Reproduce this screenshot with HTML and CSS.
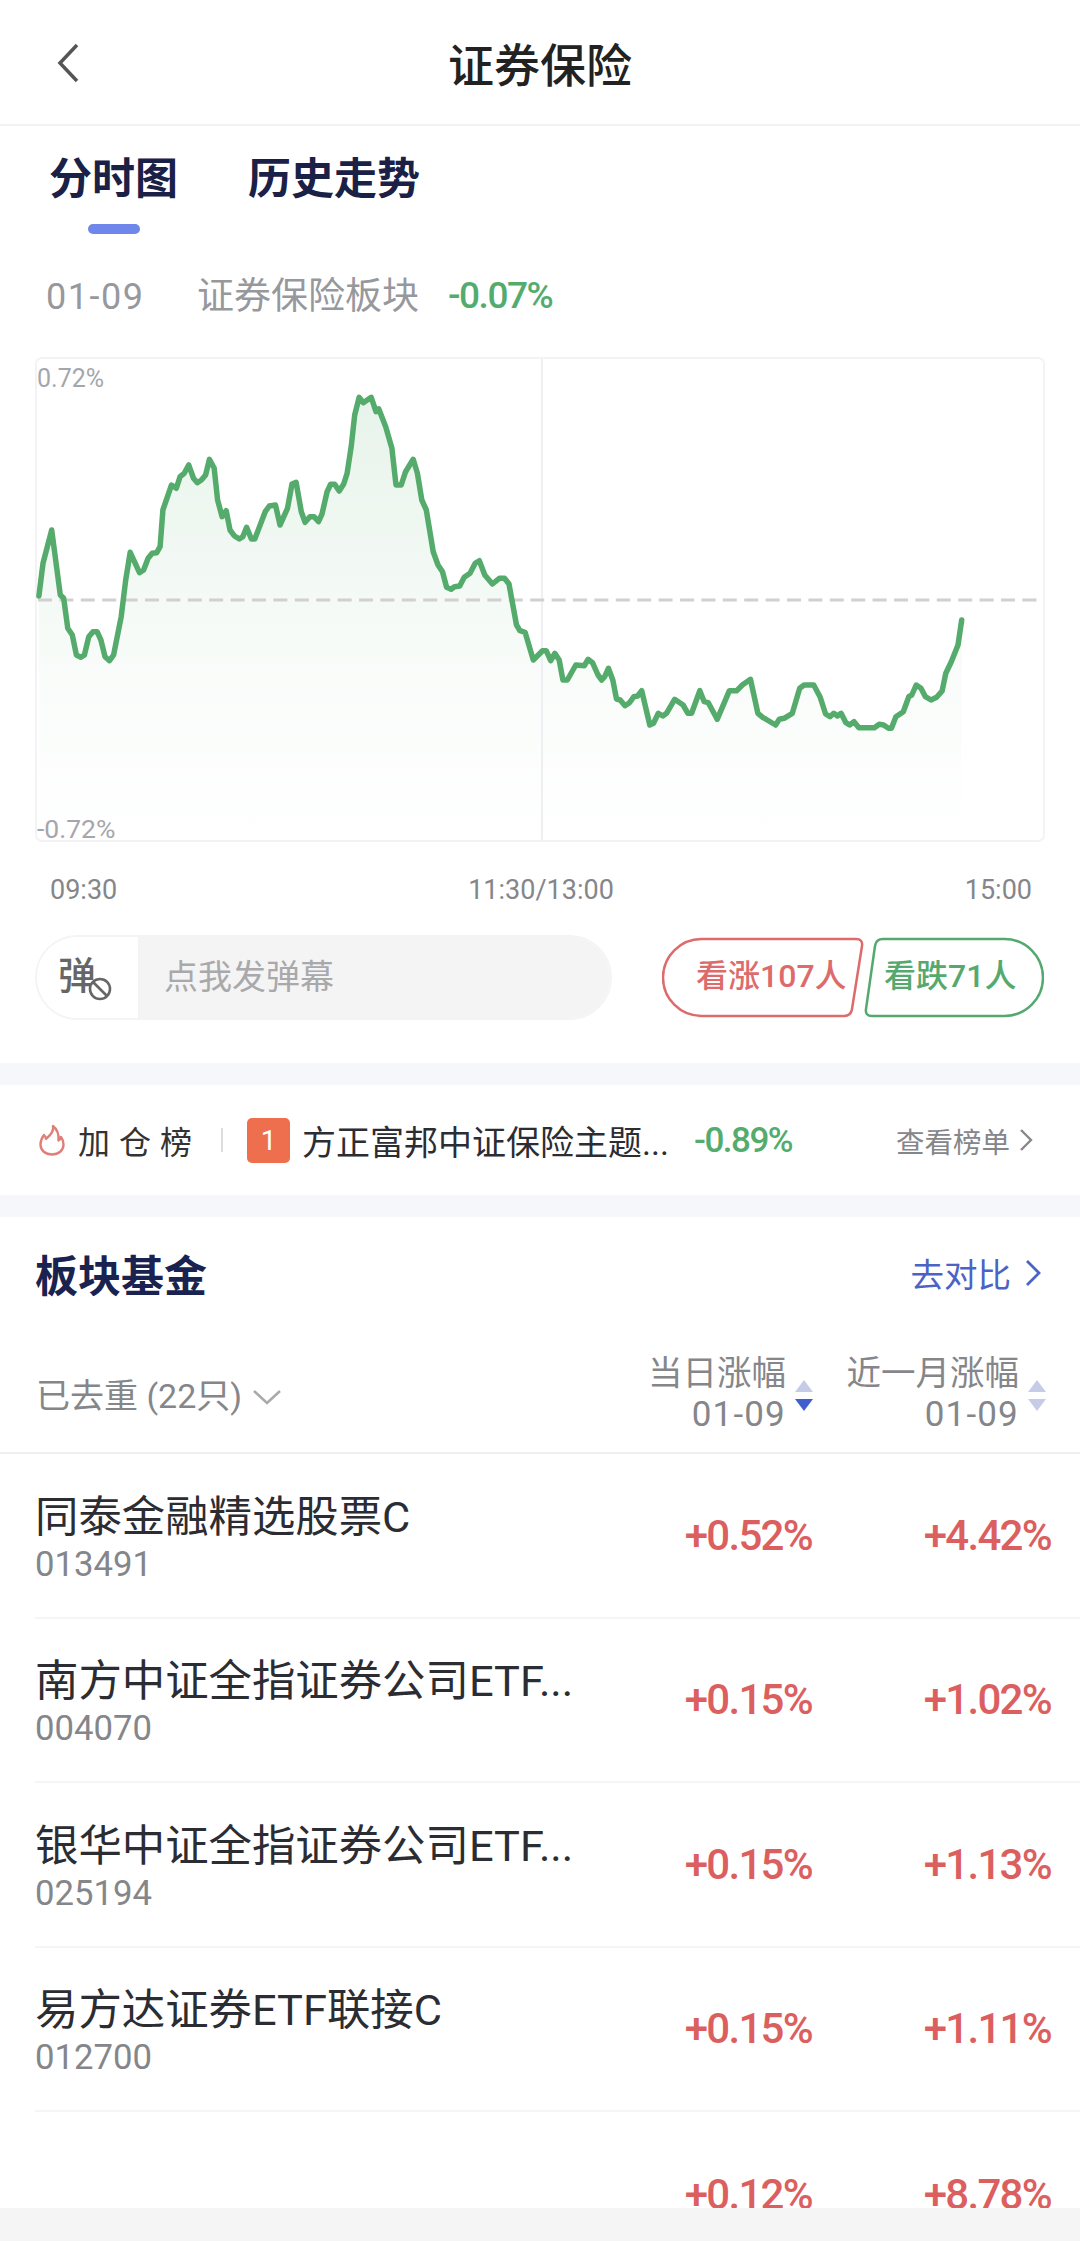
FILE: index.html
```html
<!DOCTYPE html>
<html lang="zh-CN">
<head>
    <meta charset="UTF-8">
    <meta name="viewport" content="width=device-width, initial-scale=1.0">
    <title>证券保险</title>
    <link rel="stylesheet" href="styles.css">
</head>
<body>
<div class="page">
    <div class="content">
        <div class="nav">
            <svg class="nav-back" width="24" height="40" viewBox="0 0 24 40"><path d="M21 2 L4 20 L21 38" fill="none" stroke="#555" stroke-width="3.5"/></svg>
            <div class="nav-title">证券保险</div>
        </div>

        <section class="trend">
            <div class="tabs">
                <div class="tab active">分时图<i></i></div>
                <div class="tab">历史走势</div>
            </div>

            <div class="date-row">
                <span class="date">01-09</span>
                <span class="board">证券保险板块</span>
                <span class="pct green">-0.07%</span>
            </div>

            <div class="chart">
                <svg width="1010" height="485" viewBox="35 357 1010 485">
                    <defs>
                        <linearGradient id="area" gradientUnits="userSpaceOnUse" x1="0" y1="397" x2="0" y2="842">
                            <stop offset="0" stop-color="#55ab6c" stop-opacity="0.14"/>
                            <stop offset="0.6" stop-color="#55ab6c" stop-opacity="0.04"/>
                            <stop offset="1" stop-color="#55ab6c" stop-opacity="0"/>
                        </linearGradient>
                    </defs>
                    <rect x="36" y="358" width="1008" height="483" rx="6" fill="#fff" stroke="#f3f3f5" stroke-width="2"/>
                    <polygon fill="url(#area)" points="38.9,842 38.9,596 43,563.3 51.7,530 60.3,595 63.7,598.3 67.8,628.3 72.3,635 76.4,655 80.9,657.3 84.4,655 88.8,636.7 93,631.7 97.1,631.7 100.9,640 105,656.7 109.5,660.7 113.6,655 121.2,616.7 125.7,580 130.2,552.3 139.5,572.7 143.6,570 148.1,558.3 152.2,553.3 156.7,552.7 160.1,546.7 162.9,510 171.5,485 176.3,488.3 180.1,476.7 184.2,473.3 188.7,465 193.5,478.3 197.3,482.7 201.4,480 205.6,475 209.4,459.3 214.2,468.3 217.6,500 222.1,516.7 226.2,510.7 230,530 234.2,535.7 239.3,539 242.8,536.7 246.6,527.3 251.4,539 254.8,539 265.2,511.7 269.3,506 275.5,505 280,525 287.5,508.3 292,484 296.1,482.3 301.3,511.7 305.1,522.3 309.9,516.7 314,516.7 318.5,521.7 322,514 327.1,491.7 330.6,484.3 334.7,484.3 339.2,491 343.7,484 347.1,473.3 351.2,446.7 354.7,415 359.2,397.3 363.3,402.7 371.2,397.3 376,411.7 378.8,409 385.7,426.7 391.9,448.3 396,485 401.2,485 405.6,471.7 413.2,459.3 417.4,473.3 421.8,500 426.3,510 433.2,551.7 438,565 442.5,571.7 446.6,587.3 451.1,589.3 454.5,586.7 459.7,586 464.2,577.3 470,573.3 475.2,563.3 479.3,560.7 484.8,575 492.4,584 499.3,578.3 504.5,578.3 509,584 516.5,625 520,630.7 525.1,632.3 533.3,660 542.5,650.7 546.2,650.7 550.7,660.7 554.8,653.3 559.2,660 562.9,680 567.3,680 575.8,665 584.4,665.7 588,659.3 592.5,662.7 598,675 601.7,680 604.7,676.7 608.4,668.3 612.8,680 616.5,699 620.2,700 625,705.7 629.5,702.7 633.9,696.7 637.6,696 641.7,690.7 649.8,725 653.5,723.3 658.3,713.3 662.8,716 666.5,713.3 674.6,699.3 683.1,705 687.9,713.3 691.6,713.3 699.8,690.7 704.2,701.7 708.3,702.7 717.2,719.3 729.4,690.7 736.8,690.7 742.3,685 750.5,679.3 757.9,713.3 762.7,717.3 775.6,725 779.3,719.3 784.1,718.3 792.3,713.3 799.7,688.3 804.1,685 813.7,685 820,696.7 825.6,714 830,716.7 833.7,713.3 837.4,716 841.1,713.3 845.9,722.7 849.6,725 854,721.7 858.9,727.7 874.4,727.7 879.2,724.3 883.6,725 888.5,728.3 891.4,728.3 895.9,716.7 903.3,711.7 908.8,696.7 911.8,695 916.2,685 921,688.3 925.4,696.7 931,700 936.6,697.3 942.1,691 945.8,673.3 951.3,661.7 958,645 961.7,620 961.7,842"/>
                    <line x1="542" y1="359" x2="542" y2="840" stroke="#eeeff3" stroke-width="2"/>
                    <line x1="38" y1="600" x2="1043" y2="600" stroke="#d0d0d2" stroke-width="3" stroke-dasharray="14 7.4"/>
                    <polyline fill="none" stroke="#55ab6c" stroke-width="5.5" stroke-linejoin="round" stroke-linecap="round" points="38.9,596 43,563.3 51.7,530 60.3,595 63.7,598.3 67.8,628.3 72.3,635 76.4,655 80.9,657.3 84.4,655 88.8,636.7 93,631.7 97.1,631.7 100.9,640 105,656.7 109.5,660.7 113.6,655 121.2,616.7 125.7,580 130.2,552.3 139.5,572.7 143.6,570 148.1,558.3 152.2,553.3 156.7,552.7 160.1,546.7 162.9,510 171.5,485 176.3,488.3 180.1,476.7 184.2,473.3 188.7,465 193.5,478.3 197.3,482.7 201.4,480 205.6,475 209.4,459.3 214.2,468.3 217.6,500 222.1,516.7 226.2,510.7 230,530 234.2,535.7 239.3,539 242.8,536.7 246.6,527.3 251.4,539 254.8,539 265.2,511.7 269.3,506 275.5,505 280,525 287.5,508.3 292,484 296.1,482.3 301.3,511.7 305.1,522.3 309.9,516.7 314,516.7 318.5,521.7 322,514 327.1,491.7 330.6,484.3 334.7,484.3 339.2,491 343.7,484 347.1,473.3 351.2,446.7 354.7,415 359.2,397.3 363.3,402.7 371.2,397.3 376,411.7 378.8,409 385.7,426.7 391.9,448.3 396,485 401.2,485 405.6,471.7 413.2,459.3 417.4,473.3 421.8,500 426.3,510 433.2,551.7 438,565 442.5,571.7 446.6,587.3 451.1,589.3 454.5,586.7 459.7,586 464.2,577.3 470,573.3 475.2,563.3 479.3,560.7 484.8,575 492.4,584 499.3,578.3 504.5,578.3 509,584 516.5,625 520,630.7 525.1,632.3 533.3,660 542.5,650.7 546.2,650.7 550.7,660.7 554.8,653.3 559.2,660 562.9,680 567.3,680 575.8,665 584.4,665.7 588,659.3 592.5,662.7 598,675 601.7,680 604.7,676.7 608.4,668.3 612.8,680 616.5,699 620.2,700 625,705.7 629.5,702.7 633.9,696.7 637.6,696 641.7,690.7 649.8,725 653.5,723.3 658.3,713.3 662.8,716 666.5,713.3 674.6,699.3 683.1,705 687.9,713.3 691.6,713.3 699.8,690.7 704.2,701.7 708.3,702.7 717.2,719.3 729.4,690.7 736.8,690.7 742.3,685 750.5,679.3 757.9,713.3 762.7,717.3 775.6,725 779.3,719.3 784.1,718.3 792.3,713.3 799.7,688.3 804.1,685 813.7,685 820,696.7 825.6,714 830,716.7 833.7,713.3 837.4,716 841.1,713.3 845.9,722.7 849.6,725 854,721.7 858.9,727.7 874.4,727.7 879.2,724.3 883.6,725 888.5,728.3 891.4,728.3 895.9,716.7 903.3,711.7 908.8,696.7 911.8,695 916.2,685 921,688.3 925.4,696.7 931,700 936.6,697.3 942.1,691 945.8,673.3 951.3,661.7 958,645 961.7,620"/>
                </svg>
                <span class="chart-label top">0.72%</span>
                <span class="chart-label bottom">-0.72%</span>
            </div>

            <div class="axis">
                <span>09:30</span>
                <span>11:30/13:00</span>
                <span>15:00</span>
            </div>

            <div class="danmu-row">
                <div class="danmu">
                    <div class="danmu-switch">
                        <span>弹</span>
                        <svg class="danmu-ban" width="24" height="24" viewBox="0 0 24 24"><circle cx="12" cy="12" r="10" fill="#fff" stroke="#666" stroke-width="2.6"/><line x1="5.5" y1="5.5" x2="18.5" y2="18.5" stroke="#666" stroke-width="2.6"/></svg>
                    </div>
                    <div class="danmu-input">点我发弹幕</div>
                </div>
                <div class="votes">
                    <div class="vote up">
                        <svg width="202" height="81" viewBox="0 0 202 81"><path d="M39.500 2 H194 Q201 2 200 9 L190 72 Q189 79 182 79 H39.500 A38.500 38.500 0 0 1 39.500 2 Z" fill="#fff" stroke="#dd6b6b" stroke-width="2.500"/></svg>
                        <span>看涨107人</span>
                    </div>
                    <div class="vote down">
                        <svg width="180" height="81" viewBox="0 0 180 81"><path d="M140.500 2 H19 Q12 2 11 9 L2 72 Q1 79 8 79 H140.500 A38.500 38.500 0 0 0 140.500 2 Z" fill="#fff" stroke="#55a96f" stroke-width="2.500"/></svg>
                        <span>看跌71人</span>
                    </div>
                </div>
            </div>
        </section>

        <section class="rank">
            <svg class="rank-fire" width="26" height="32" viewBox="0 0 26 32"><path d="M14 2 C15 8 11 11 7 15 C7 13 6 12 5 11 C2 15 1.500 18 1.500 20.500 C1.500 26.500 6.500 30.500 13 30.500 C19.500 30.500 24.500 26.500 24.500 20.500 C24.500 17.500 23.500 15 22 13 C21.500 15 20.500 16 19.500 16.500 C20 10 18 5 14 2 Z" fill="none" stroke="#e07f78" stroke-width="2.400" stroke-linejoin="round"/></svg>
            <span class="rank-name">加仓榜</span>
            <i class="rank-sep"></i>
            <span class="rank-badge">1</span>
            <span class="rank-fund">方正富邦中证保险主题...</span>
            <span class="rank-pct green">-0.89%</span>
            <span class="rank-more">查看榜单</span>
            <svg class="rank-arrow" width="14" height="24" viewBox="0 0 14 24"><path d="M2 2 L12 12 L2 22" fill="none" stroke="#888" stroke-width="2.400"/></svg>
        </section>

        <section class="funds">
            <div class="funds-head">
                <h2>板块基金</h2>
                <div class="compare">去对比
                    <svg width="16" height="28" viewBox="0 0 16 28"><path d="M2 2 L14 14 L2 26" fill="none" stroke="#4a63c4" stroke-width="2.800"/></svg>
                </div>
            </div>

            <div class="table-head">
                <div class="filter">已去重 (22只)
                    <svg width="30" height="16" viewBox="0 0 30 16"><path d="M2 2 L15 14 L28 2" fill="none" stroke="#aaa" stroke-width="2.600"/></svg>
                </div>
                <div class="sort-col first">
                    <div class="sort-text">当日涨幅<small>01-09</small></div>
                    <div class="sort-arrows"><i class="up"></i><i class="down on"></i></div>
                </div>
                <div class="sort-col">
                    <div class="sort-text">近一月涨幅<small>01-09</small></div>
                    <div class="sort-arrows"><i class="up"></i><i class="down"></i></div>
                </div>
            </div>

            <div class="fund-row">
                <div class="fund-info"><div class="fund-name">同泰金融精选股票C</div><div class="fund-code">013491</div></div>
                <div class="val first">+0.52%</div>
                <div class="val">+4.42%</div>
            </div>
            <div class="fund-row">
                <div class="fund-info"><div class="fund-name">南方中证全指证券公司ETF...</div><div class="fund-code">004070</div></div>
                <div class="val first">+0.15%</div>
                <div class="val">+1.02%</div>
            </div>
            <div class="fund-row">
                <div class="fund-info"><div class="fund-name">银华中证全指证券公司ETF...</div><div class="fund-code">025194</div></div>
                <div class="val first">+0.15%</div>
                <div class="val">+1.13%</div>
            </div>
            <div class="fund-row">
                <div class="fund-info"><div class="fund-name">易方达证券ETF联接C</div><div class="fund-code">012700</div></div>
                <div class="val first">+0.15%</div>
                <div class="val">+1.11%</div>
            </div>
            <div class="fund-row">
                <div class="fund-info"><div class="fund-name">&nbsp;</div><div class="fund-code">015740</div></div>
                <div class="val first">+0.12%</div>
                <div class="val">+8.78%</div>
            </div>
        </section>
    </div>
    <div class="bottom-bar"></div>
</div>
</body>
</html>
```

FILE: styles.css
```css
* { margin: 0; padding: 0; box-sizing: border-box; }
body { background: #fff; font-family: Roboto, "Noto Sans CJK SC", sans-serif; color: #2b2d33; }

.page { width: 1080px; height: 2241px; display: flex; flex-direction: column; overflow: hidden; }
.content { flex: 1; min-height: 0; overflow: hidden; }
.bottom-bar { height: 33px; background: #f5f5f5; }

.green { color: #53ac6e; }

.nav {
    position: relative;
    height: 126px;
    border-bottom: 2px solid #f3f3f3;
    display: flex;
    align-items: center;
    justify-content: center;
}
.nav-back { position: absolute; left: 56px; top: 43px; }
.nav-title { font-size: 46px; font-weight: 500; color: #222; }

.tabs { display: flex; gap: 70px; padding: 23px 0 0 49px; }
.tab { display: flex; flex-direction: column; align-items: center; font-size: 43px; font-weight: 700; line-height: 60px; color: #1a2046; }
.tab i { display: block; width: 52px; height: 10px; margin-top: 15px; border-radius: 5px; background: #6f86ea; }

.date-row { display: flex; align-items: center; height: 34px; margin-top: 44px; padding-left: 46px; color: #97989c; }
.date { font-size: 36px; letter-spacing: 1.500px; width: 151px; padding-top: 4px; }
.board { font-size: 37px; width: 251px; padding-bottom: 4px; }
.pct { font-size: 37px; font-weight: 500; letter-spacing: -1.500px; }

.chart { position: relative; height: 485px; margin: 45px 35px 0; }
.chart svg { display: block; }
.chart-label { position: absolute; left: 2px; line-height: 30px; color: #a5a6ab; }
.chart-label.top { top: 7px; font-size: 25px; }
.chart-label.bottom { bottom: -2px; font-size: 26.500px; }

.axis { display: flex; justify-content: space-between; margin-top: 31px; padding: 0 48px 0 50px; font-size: 27px; line-height: 34px; color: #85868a; }

.danmu-row { display: flex; justify-content: space-between; margin-top: 28px; padding: 0 36px 43px 35px; }
.danmu { display: flex; width: 577px; height: 85px; border-radius: 43px; overflow: hidden; border: 2px solid #f4f4f5; }
.danmu-switch { position: relative; width: 101px; background: #fff; }
.danmu-switch span { position: absolute; left: 21px; top: 14px; font-size: 38px; line-height: 50px; font-weight: 500; color: #666; }
.danmu-ban { position: absolute; left: 51px; top: 40px; }
.danmu-input { flex: 1; padding-left: 26px; background: #f4f4f5; font-size: 34px; line-height: 81px; color: #a9a9ab; }

.votes { display: flex; align-items: flex-start; margin-top: 2px; }
.vote { position: relative; height: 81px; font-size: 32px; font-weight: 500; line-height: 79px; }
.vote svg { display: block; }
.vote span { position: absolute; top: 0; white-space: nowrap; }
.vote.up { width: 202px; color: #dd6b6b; }
.vote.up span { left: 34px; }
.vote.down { width: 180px; color: #55a96f; }
.vote.down span { left: 20px; }

.rank, .funds { border-top: 22px solid #f6f7fb; }
.rank { display: flex; align-items: center; height: 132px; padding-left: 39px; }
.rank-name { margin-left: 13px; font-size: 32px; letter-spacing: 9px; width: 143px; color: #333; }
.rank-sep { width: 2px; height: 24px; background: #ddd; }
.rank-badge { width: 43px; height: 45px; margin-left: 24px; border-radius: 5px; background: #ee6f4e; color: #fff; font-size: 28px; line-height: 45px; text-align: center; }
.rank-fund { margin-left: 12px; font-size: 34px; width: 392px; white-space: nowrap; }
.rank-pct { font-size: 35px; font-weight: 500; letter-spacing: -1.500px; width: 202px; }
.rank-more { font-size: 28.500px; color: #85868a; }
.rank-arrow { margin-left: 9px; }

.funds-head { display: flex; justify-content: space-between; align-items: center; height: 116px; padding: 0 39px 5px 35px; }
.funds-head h2 { font-size: 43px; font-weight: 700; color: #1a2350; }
.compare { display: flex; align-items: center; gap: 14px; font-size: 33.500px; color: #4a63c4; }

.table-head { display: flex; align-items: center; height: 121px; padding: 2px 34px 0 36px; border-bottom: 2px solid #efefef; color: #85868a; }
.filter { flex: 1; display: flex; align-items: center; gap: 10px; font-size: 34px; }
.filter svg { margin-top: 6px; }
.sort-col { display: flex; align-items: center; gap: 9px; width: 233px; justify-content: flex-end; }
.sort-col.first { width: 180px; }
.sort-text { display: flex; flex-direction: column; align-items: flex-end; font-size: 34.500px; line-height: 41px; }
.sort-text small { font-size: 35px; letter-spacing: 1.200px; }
.sort-arrows { display: flex; flex-direction: column; gap: 7px; margin-top: 4px; }
.sort-arrows i { display: block; width: 0; height: 0; border-left: 9px solid transparent; border-right: 9px solid transparent; }
.sort-arrows .up { border-bottom: 12px solid #c6cbe8; }
.sort-arrows .down { border-top: 12px solid #c6cbe8; }
.sort-arrows .down.on { border-top-color: #3f5fd0; }

.fund-row { display: flex; align-items: center; height: 164.500px; margin-left: 35px; padding-right: 29px; border-bottom: 2px solid #f5f5f6; }
.fund-row:last-child { border-bottom: none; }
.fund-info { flex: 1; min-width: 0; padding-top: 9px; }
.fund-name { font-size: 43.400px; line-height: 44px; white-space: nowrap; color: #2b2d33; }
.fund-code { font-size: 34.700px; line-height: 40px; margin-top: 4px; color: #85868a; }
.val { width: 239px; text-align: right; font-size: 42px; font-weight: 500; letter-spacing: -1.700px; color: #dc5f5f; }
.val.first { width: 180px; }
```
